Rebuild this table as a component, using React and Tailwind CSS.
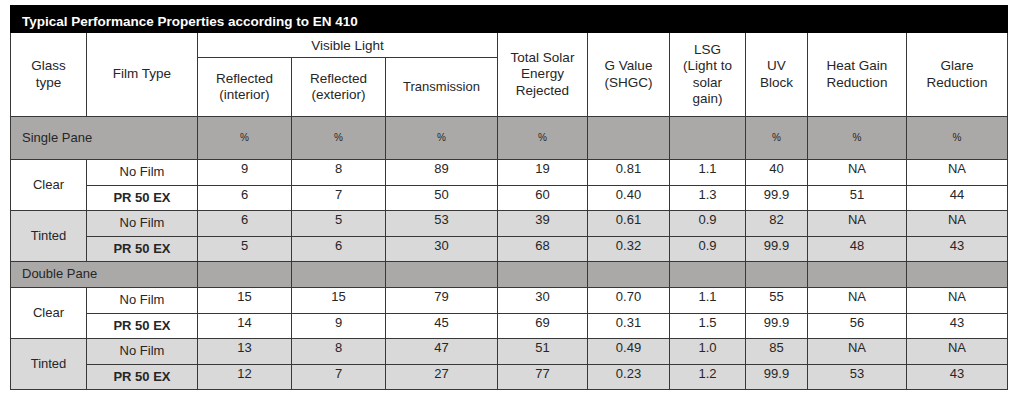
import React from "react";

const rows = [
  { section: "Single Pane" },
  { glass: "Clear", tint: false, film: "No Film", v: ["9", "8", "89", "19", "0.81", "1.1", "40", "NA", "NA"] },
  { film: "PR 50 EX", tint: false, bold: true, v: ["6", "7", "50", "60", "0.40", "1.3", "99.9", "51", "44"] },
  { glass: "Tinted", tint: true, film: "No Film", v: ["6", "5", "53", "39", "0.61", "0.9", "82", "NA", "NA"] },
  { film: "PR 50 EX", tint: true, bold: true, v: ["5", "6", "30", "68", "0.32", "0.9", "99.9", "48", "43"] },
  { section: "Double Pane" },
  { glass: "Clear", tint: false, film: "No Film", v: ["15", "15", "79", "30", "0.70", "1.1", "55", "NA", "NA"] },
  { film: "PR 50 EX", tint: false, bold: true, v: ["14", "9", "45", "69", "0.31", "1.5", "99.9", "56", "43"] },
  { glass: "Tinted", tint: true, film: "No Film", v: ["13", "8", "47", "51", "0.49", "1.0", "85", "NA", "NA"] },
  { film: "PR 50 EX", tint: true, bold: true, v: ["12", "7", "27", "77", "0.23", "1.2", "99.9", "53", "43"] },
];

// which columns carry a "%" in the Single Pane row
const units = ["%", "%", "%", "%", "", "", "%", "%", "%"];

const cell = "border border-[#383838] text-center align-middle";
const head = `${cell} font-normal text-[13.5px]`;

export default function App() {
  return (
    <div className="bg-white w-[1024px] h-[403px] pt-[5px] pl-[10px] font-['Liberation_Sans',Arial,sans-serif] text-[#262626]">
      <table className="w-[997px] table-fixed border-collapse text-[13px] leading-[16.5px]">
        <colgroup>
          <col className="w-[76px]" />
          <col className="w-[111px]" />
          <col className="w-[94px]" />
          <col className="w-[94px]" />
          <col className="w-[112px]" />
          <col className="w-[90px]" />
          <col className="w-[82px]" />
          <col className="w-[76px]" />
          <col className="w-[62px]" />
          <col className="w-[99px]" />
          <col className="w-[101px]" />
        </colgroup>
        <thead>
          <tr className="h-[27px]">
            <th colSpan={11} className="bg-black text-white text-left font-bold text-[13.5px] pl-[11px] pt-[7px] pb-0 border border-black">
              Typical Performance Properties according to EN 410
            </th>
          </tr>
          <tr className="h-[25px]">
            <th rowSpan={2} className={head}>Glass<br />type</th>
            <th rowSpan={2} className={head}>Film Type</th>
            <th colSpan={3} className={`${head} pt-[2px]`}>Visible Light</th>
            <th rowSpan={2} className={head}>Total Solar<br />Energy<br />Rejected</th>
            <th rowSpan={2} className={head}>G Value<br />(SHGC)</th>
            <th rowSpan={2} className={head}>LSG<br />(Light to<br />solar<br />gain)</th>
            <th rowSpan={2} className={head}>UV<br />Block</th>
            <th rowSpan={2} className={head}>Heat Gain<br />Reduction</th>
            <th rowSpan={2} className={head}>Glare<br />Reduction</th>
          </tr>
          <tr className="h-[59px]">
            <th className={head}>Reflected<br />(interior)</th>
            <th className={head}>Reflected<br />(exterior)</th>
            <th className={`${cell} font-normal`}>Transmission</th>
          </tr>
        </thead>
        <tbody>
          {rows.map((r, i) => {
            if (r.section) {
              const single = r.section === "Single Pane";
              return (
                <tr key={i} className={`${single ? "h-[43px]" : "h-[26px]"} bg-[#aba9a8]`}>
                  <td colSpan={2} className="border border-[#383838] text-left pl-[11px] align-middle">
                    {r.section}
                  </td>
                  {units.map((u, j) => (
                    <td key={j} className={`${cell} text-[10px]`}>
                      {single ? u : ""}
                    </td>
                  ))}
                </tr>
              );
            }
            const bg = r.tint ? "bg-[#d9d9d9]" : "bg-white";
            return (
              <tr key={i} className={`h-[25.5px] ${bg}`}>
                {r.glass && (
                  <td rowSpan={2} className={cell}>
                    {r.glass}
                  </td>
                )}
                <td className={`${cell} ${r.bold ? "font-bold" : ""}`}>{r.film}</td>
                {r.v.map((x, j) => (
                  <td key={j} className={`${cell} pb-[6px]`}>
                    {x}
                  </td>
                ))}
              </tr>
            );
          })}
        </tbody>
      </table>
    </div>
  );
}
